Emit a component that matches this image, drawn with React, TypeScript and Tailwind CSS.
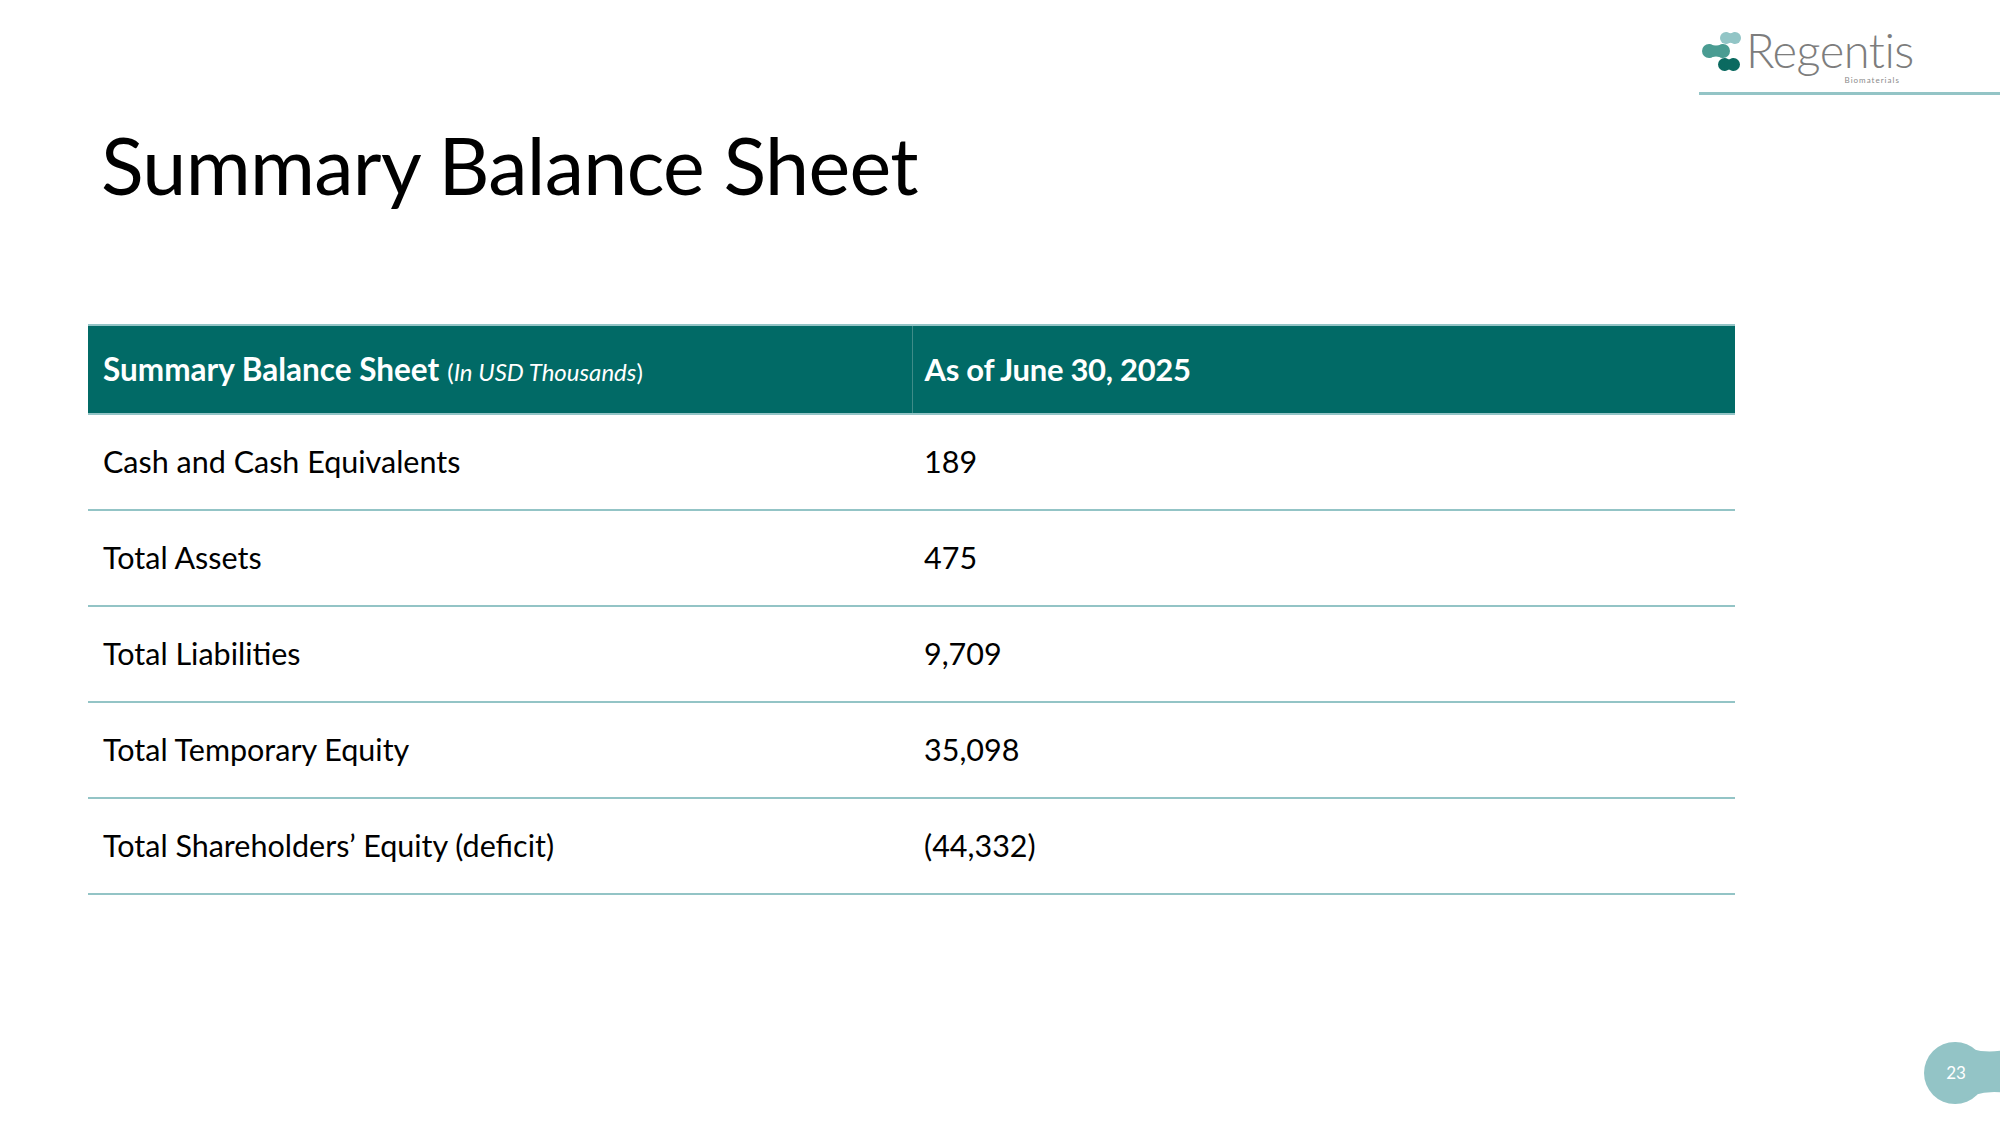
import React from 'react';

const rows = [
    { label: 'Cash and Cash Equivalents', value: '189' },
    { label: 'Total Assets', value: '475' },
    { label: 'Total Liabilities', value: '9,709' },
    { label: 'Total Temporary Equity', value: '35,098' },
    { label: 'Total Shareholders’ Equity (deficit)', value: '(44,332)' },
];

// peanut-like blob: two circles joined by a pinched waist
const Blob = ({ x1, x2, y, r, w, fill }: { x1: number; x2: number; y: number; r: number; w: number; fill: string }) => {
    const mid = (x1 + x2) / 2;
    return (
        <g fill={fill}>
            <circle cx={x1} cy={y} r={r} />
            <circle cx={x2} cy={y} r={r} />
            <path d={`M${x1} ${y - r} Q${mid} ${y - w} ${x2} ${y - r} L${x2} ${y + r} Q${mid} ${y + w} ${x1} ${y + r} Z`} />
        </g>
    );
};

const Logo = () => (
    <div className="w-[301px] border-b-[3px] border-[#93c4c6] pb-[7px]">
        <div className="flex items-start">
            <svg width="46" height="46" viewBox="0 0 46 46" className="mt-[3px] shrink-0">
                <Blob x1={27} x2={36} y={9} r={6} w={3.4} fill="#92c5c6" />
                <Blob x1={10} x2={24} y={22} r={7} w={3.8} fill="#4a9c92" />
                <Blob x1={25.5} x2={34.5} y={35.5} r={6.5} w={3.6} fill="#0b6a60" />
            </svg>
            <div className="ml-[1px] flex flex-col items-end">
                <div className="text-[47px] leading-[48px] font-light text-[#7d7d7d] tracking-[-0.5px]">Regentis</div>
                <div className="mr-[14px] mt-[1px] text-[8px] leading-[10px] tracking-[1px] text-[#8a8a8a]">
                    Biomaterials
                </div>
            </div>
        </div>
    </div>
);

export default function App() {
    return (
        <div className="relative w-[2000px] h-[1125px] bg-white overflow-hidden font-['Lato',sans-serif] text-black">
            <div className="flex justify-end pt-[26px]">
                <Logo />
            </div>

            <h1 className="ml-[101px] mt-[22px] text-[79px] leading-[96px] tracking-[-0.7px] font-normal">
                Summary Balance Sheet
            </h1>

            <table className="ml-[88px] mt-[111px] w-[1647px] border-collapse">
                <thead>
                    <tr className="h-[89px] bg-[#016a66] border-t-[2px] border-b-[2px] border-[#93c4c6] text-white">
                        <th className="w-[824px] pl-[15px] text-left align-middle border-r border-[#3f8c88]">
                            <span className="text-[31.5px] font-bold">Summary Balance Sheet</span>
                            <span className="ml-[8px] text-[24px] font-normal">
                                (<i>In USD Thousands</i>)
                            </span>
                        </th>
                        <th className="pl-[12px] text-left align-middle text-[31px] font-bold tracking-[-0.3px]">
                            As of June 30, 2025
                        </th>
                    </tr>
                </thead>
                <tbody>
                    {rows.map((r) => (
                        <tr key={r.label} className="h-[96px] border-b-[2px] border-[#93c4c6] text-[30.5px]">
                            <td className="pl-[15px] align-middle">{r.label}</td>
                            <td className="pl-[12px] align-middle">{r.value}</td>
                        </tr>
                    ))}
                </tbody>
            </table>

            <svg width="81" height="70" viewBox="0 0 81 70" className="absolute right-0 top-[1038px]">
                <g fill="#93c4c6">
                    <circle cx="36" cy="35" r="31" />
                    <circle cx="96" cy="33" r="24" />
                    <path d="M36 4 Q64 20 96 9 L96 57 Q64 48 36 66 Z" />
                </g>
            </svg>
            <div className="absolute left-[1920px] top-[1061px] w-[72px] text-center text-[17px] leading-[24px] text-white">23</div>
        </div>
    );
}
